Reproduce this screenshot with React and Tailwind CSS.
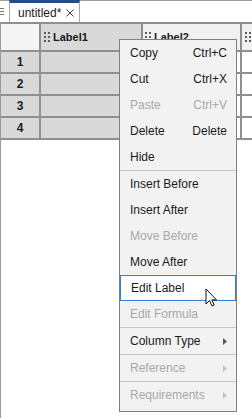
import React from 'react';

const Grip = () => (
  <svg width="6" height="10" viewBox="0 0 6 10" className="shrink-0">
    {[0, 4].map((x) =>
      [0, 4, 8].map((y) => <rect key={`${x}-${y}`} x={x} y={y} width="2" height="2" fill="#5a5a5a" />)
    )}
  </svg>
);

const Arrow = ({ disabled }) => (
  <svg width="4" height="7" viewBox="0 0 4 7">
    <path d="M0 0 L4 3.5 L0 7 Z" fill={disabled ? '#c2c2c2' : '#555'} />
  </svg>
);

const MenuItem = ({ label, shortcut, disabled, sub, active }) => (
  <div
    className={`flex items-center justify-between h-[26px] pl-[10px] pr-[9px] text-[12px] ${
      disabled ? 'text-[#a8a8a8]' : 'text-[#1a1a1a]'
    } ${active ? 'border border-[#2f83d6] bg-white pl-[9px]' : ''}`}
  >
    <span>{label}</span>
    {shortcut && <span>{shortcut}</span>}
    {sub && <Arrow disabled={disabled} />}
  </div>
);

const Sep = () => <div className="h-px bg-[#c6c6c6]" />;

export default function App() {
  const rows = [1, 2, 3, 4];
  const line = 'border-r-2 border-b-2 border-[#8f8f8f]';

  return (
    <div className="relative w-[252px] h-[418px] bg-white overflow-hidden font-['Liberation_Sans',Arial,sans-serif] flex flex-col">
      {/* tab strip */}
      <div className="h-[22px] flex items-stretch border-t border-[#a0a0a0] bg-white">
        <div className="w-[9px] flex flex-col justify-center gap-[2px]">
          <div className="w-[4px] h-px bg-[#777]" />
          <div className="w-[4px] h-px bg-[#777]" />
          <div className="w-[4px] h-px bg-[#777]" />
        </div>
        <div className="-mt-px w-[71px] border-t-[3px] border-t-[#1d4f86] border-l border-r border-[#a8a8a8] bg-white flex items-center pl-[8px] gap-[5px] text-[12px] text-[#1a1a1a]">
          <span>untitled*</span>
          <svg width="8" height="8" viewBox="0 0 8 8">
            <path d="M0.5 0.5 L7.5 7.5 M7.5 0.5 L0.5 7.5" stroke="#444" strokeWidth="1" />
          </svg>
        </div>
      </div>

      {/* table */}
      <div className="flex-1 border-l border-[#9a9a9a]">
        <div className="grid grid-cols-[40px_102px_99px_1fr] border-t-2 border-[#8f8f8f]">
          <div className={`h-[28px] bg-[#f5f5f5] ${line}`} />
          <div className={`h-[28px] bg-[#d9d9d9] flex items-center gap-[3px] pl-[3px] text-[11px] font-bold text-[#1a1a1a] ${line}`}>
            <Grip />
            <span>Label1</span>
          </div>
          <div className={`h-[28px] bg-[#f1f1f1] flex items-center gap-[3px] pl-[2px] text-[11px] font-bold text-[#1a1a1a] ${line}`}>
            <Grip />
            <span>Label2</span>
          </div>
          <div className="h-[28px] bg-[#f1f1f1] flex items-center pl-[3px] border-b-2 border-[#8f8f8f]">
            <Grip />
          </div>
          {rows.map((r) => (
            <React.Fragment key={r}>
              <div className={`h-[22px] bg-[#d9d9d9] flex items-center justify-center text-[12px] font-bold text-[#1a1a2a] ${line}`}>
                {r}
              </div>
              <div className={`h-[22px] bg-[#d9d9d9] ${line}`} />
              <div className={`h-[22px] bg-white ${line}`} />
              <div className="h-[22px] bg-white border-b-2 border-[#8f8f8f]" />
            </React.Fragment>
          ))}
        </div>
      </div>

      {/* context menu */}
      <div className="absolute left-[119px] top-[39px] w-[118px] bg-[#f2f2f2] border border-[#7f7f7f] pb-[3px] flex flex-col">
        <MenuItem label="Copy" shortcut="Ctrl+C" />
        <MenuItem label="Cut" shortcut="Ctrl+X" />
        <MenuItem label="Paste" shortcut="Ctrl+V" disabled />
        <MenuItem label="Delete" shortcut="Delete" />
        <MenuItem label="Hide" />
        <Sep />
        <MenuItem label="Insert Before" />
        <MenuItem label="Insert After" />
        <MenuItem label="Move Before" disabled />
        <MenuItem label="Move After" />
        <MenuItem label="Edit Label" active />
        <MenuItem label="Edit Formula" disabled />
        <Sep />
        <MenuItem label="Column Type" sub />
        <Sep />
        <MenuItem label="Reference" sub disabled />
        <Sep />
        <MenuItem label="Requirements" sub disabled />
      </div>

      {/* mouse cursor */}
      <svg className="absolute left-[205px] top-[288px]" width="13" height="20" viewBox="0 0 13 20">
        <path
          d="M1 1 L1 16 L4.5 12.5 L7 18 L9.2 17 L6.8 11.8 L11.5 11.8 Z"
          fill="white"
          stroke="#111"
          strokeWidth="1"
        />
      </svg>
    </div>
  );
}
